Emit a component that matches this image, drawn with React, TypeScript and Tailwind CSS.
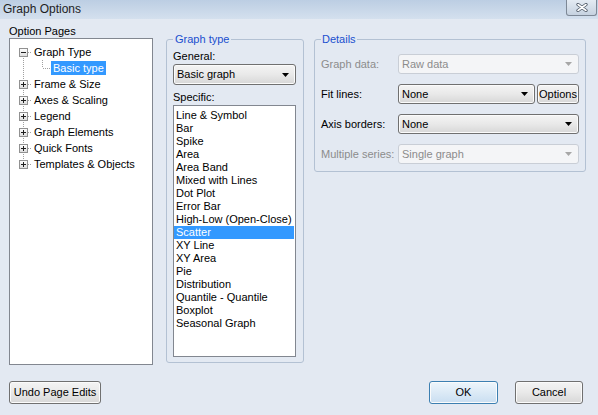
import clsx from 'clsx';

const treeItems = [
  'Frame & Size',
  'Axes & Scaling',
  'Legend',
  'Graph Elements',
  'Quick Fonts',
  'Templates & Objects',
];

const specificTypes = [
  'Line & Symbol',
  'Bar',
  'Spike',
  'Area',
  'Area Band',
  'Mixed with Lines',
  'Dot Plot',
  'Error Bar',
  'High-Low (Open-Close)',
  'Scatter',
  'XY Line',
  'XY Area',
  'Pie',
  'Distribution',
  'Quantile - Quantile',
  'Boxplot',
  'Seasonal Graph',
];

function Arrow({ disabled }: { disabled?: boolean }) {
  return (
    <svg width="7" height="4" viewBox="0 0 7 4" className="shrink-0">
      <path d="M0 0h7L3.5 4z" fill={disabled ? '#a7a7a7' : '#000'} />
    </svg>
  );
}

function Combo({ value, className, disabled }: { value: string; className?: string; disabled?: boolean }) {
  return (
    <div
      className={clsx(
        'flex h-[20px] items-center justify-between rounded-[3px] border pl-[3px] pr-[6px]',
        disabled
          ? 'border-[#c9ced6] bg-[#f4f5f7] text-[#8c8c8c]'
          : 'border-[#707070] bg-linear-to-b from-[#f4f4f4] via-[#e9e9e9] to-[#d7d7d7] text-black shadow-[inset_0_0_0_1px_#fbfbfb]',
        className,
      )}
    >
      <span>{value}</span>
      <Arrow disabled={disabled} />
    </div>
  );
}

function Button({ label, className, primary }: { label: string; className?: string; primary?: boolean }) {
  return (
    <div
      className={clsx(
        'flex items-center justify-center rounded-[3px] border shadow-[inset_0_0_0_1px_#fbfbfb]',
        primary
          ? 'border-[#3c7fb1] bg-linear-to-b from-[#eef6fc] via-[#dceaf6] to-[#c9def1]'
          : 'border-[#707070] bg-linear-to-b from-[#f4f4f4] via-[#e9e9e9] to-[#d7d7d7]',
        className,
      )}
    >
      {label}
    </div>
  );
}

// tree connector drawing: expander box + dotted lines
function Connector({ kind, sign }: { kind: 'first' | 'mid' | 'last'; sign: '+' | '-' }) {
  const y1 = kind === 'first' ? 12 : 0;
  const y2 = kind === 'last' ? 4 : 16;
  return (
    <svg width="22" height="16" viewBox="0 0 22 16" className="shrink-0">
      <line x1="13.5" y1={y1} x2="13.5" y2={y2} stroke="#a0a0a0" strokeDasharray="1 1" />
      <line x1="18" y1="8.5" x2="22" y2="8.5" stroke="#a0a0a0" strokeDasharray="1 1" />
      <defs>
        <linearGradient id="exp" x1="0" y1="0" x2="0" y2="1">
          <stop offset="0" stopColor="#ffffff" />
          <stop offset="1" stopColor="#dcdcdc" />
        </linearGradient>
      </defs>
      <rect x="9.5" y="4.5" width="8" height="8" fill="url(#exp)" stroke="#919191" />
      <line x1="11" y1="8.5" x2="16" y2="8.5" stroke="#1f1f1f" />
      {sign === '+' && <line x1="13.5" y1="6" x2="13.5" y2="11" stroke="#1f1f1f" />}
    </svg>
  );
}

function Tree() {
  return (
    <div className="h-[327px] w-[144px] border border-[#828790] bg-white pt-[5px]">
      <div className="flex h-[16px] items-center">
        <Connector kind="first" sign="-" />
        <span className="px-[2px]">Graph Type</span>
      </div>
      <div className="flex h-[16px] items-center">
        <svg width="41" height="16" viewBox="0 0 41 16" className="shrink-0">
          <line x1="13.5" y1="0" x2="13.5" y2="16" stroke="#a0a0a0" strokeDasharray="1 1" />
          <line x1="32.5" y1="0" x2="32.5" y2="8" stroke="#a0a0a0" strokeDasharray="1 1" />
          <line x1="33" y1="8.5" x2="41" y2="8.5" stroke="#a0a0a0" strokeDasharray="1 1" />
        </svg>
        <span className="h-[14px] bg-[#3399ff] px-[2px] leading-[14px] text-white">Basic type</span>
      </div>
      {treeItems.map((item, i) => (
        <div key={item} className="flex h-[16px] items-center">
          <Connector kind={i === treeItems.length - 1 ? 'last' : 'mid'} sign="+" />
          <span className="px-[2px]">{item}</span>
        </div>
      ))}
    </div>
  );
}

export default function App() {
  return (
    <div className="flex h-[415px] w-[598px] flex-col overflow-hidden bg-[#e3e9f2] font-['Liberation_Sans',Arial,sans-serif] text-[11px] leading-[13px] text-black">
      {/* title bar */}
      <div className="flex h-[19px] shrink-0 items-start justify-between bg-linear-to-b from-[#bccee3] to-[#d4e0ee]">
        <span className="pl-[3px] pt-[2px] text-[12px] leading-[15px] text-[#1e1e1e]">Graph Options</span>
        <div className="mr-[1px] flex h-[16px] w-[31px] items-center justify-center rounded-b-[3px] border border-t-0 border-[#7d8896] bg-linear-to-b from-[#e4ebf3] to-[#c6d2e0]">
          <svg width="12" height="9" viewBox="0 0 12 9">
            <path d="M2 1.5L10 7.5M10 1.5L2 7.5" stroke="#4a5563" strokeWidth="3.2" strokeLinecap="round" />
            <path d="M2 1.5L10 7.5M10 1.5L2 7.5" stroke="#ffffff" strokeWidth="1.6" strokeLinecap="round" />
          </svg>
        </div>
      </div>

      <div className="flex px-[9px]">
        {/* option pages */}
        <div className="flex w-[144px] flex-col pt-[6px]">
          <span>Option Pages</span>
          <Tree />
        </div>

        {/* graph type group */}
        <fieldset className="ml-[13px] mt-[14px] h-[330px] w-[138px] rounded-[3px] border border-[#b3c1d3] px-[6px]">
          <legend className="px-[2px] text-[#1a4fcf]">Graph type</legend>
          <div className="mt-[4px]">General:</div>
          <Combo value="Basic graph" className="mt-[1px] h-[21px] w-[123px]" />
          <div className="mt-[6px]">Specific:</div>
          <div className="mt-[1px] h-[252px] w-[123px] border border-[#828790] bg-white pt-[3px]">
            {specificTypes.map((t) => (
              <div
                key={t}
                className={clsx('mr-[1px] h-[13px] px-[2px]', t === 'Scatter' && 'bg-[#3399ff] text-white')}
              >
                {t}
              </div>
            ))}
          </div>
        </fieldset>

        {/* details group */}
        <fieldset className="ml-[10px] mt-[14px] h-[139px] w-[272px] rounded-[3px] border border-[#b3c1d3] px-[6px]">
          <legend className="px-[1px] text-[#1a4fcf]">Details</legend>
          <div className="mt-[8px] flex flex-col gap-[10px]">
            <div className="flex items-center">
              <span className="w-[77px] text-[#8c8c8c]">Graph data:</span>
              <Combo value="Raw data" disabled className="w-[181px]" />
            </div>
            <div className="flex items-center">
              <span className="w-[77px]">Fit lines:</span>
              <Combo value="None" className="w-[137px]" />
              <Button label="Options" className="ml-[2px] h-[20px] w-[42px]" />
            </div>
            <div className="flex items-center">
              <span className="w-[77px]">Axis borders:</span>
              <Combo value="None" className="w-[181px]" />
            </div>
            <div className="flex items-center">
              <span className="w-[77px] text-[#8c8c8c]">Multiple series:</span>
              <Combo value="Single graph" disabled className="w-[181px]" />
            </div>
          </div>
        </fieldset>
      </div>

      {/* footer buttons */}
      <div className="mt-[16px] flex items-center justify-between pl-[9px] pr-[15px]">
        <Button label="Undo Page Edits" className="h-[23px] w-[92px]" />
        <div className="flex gap-[17px]">
          <Button label="OK" primary className="h-[23px] w-[69px]" />
          <Button label="Cancel" className="h-[23px] w-[68px]" />
        </div>
      </div>
    </div>
  );
}
